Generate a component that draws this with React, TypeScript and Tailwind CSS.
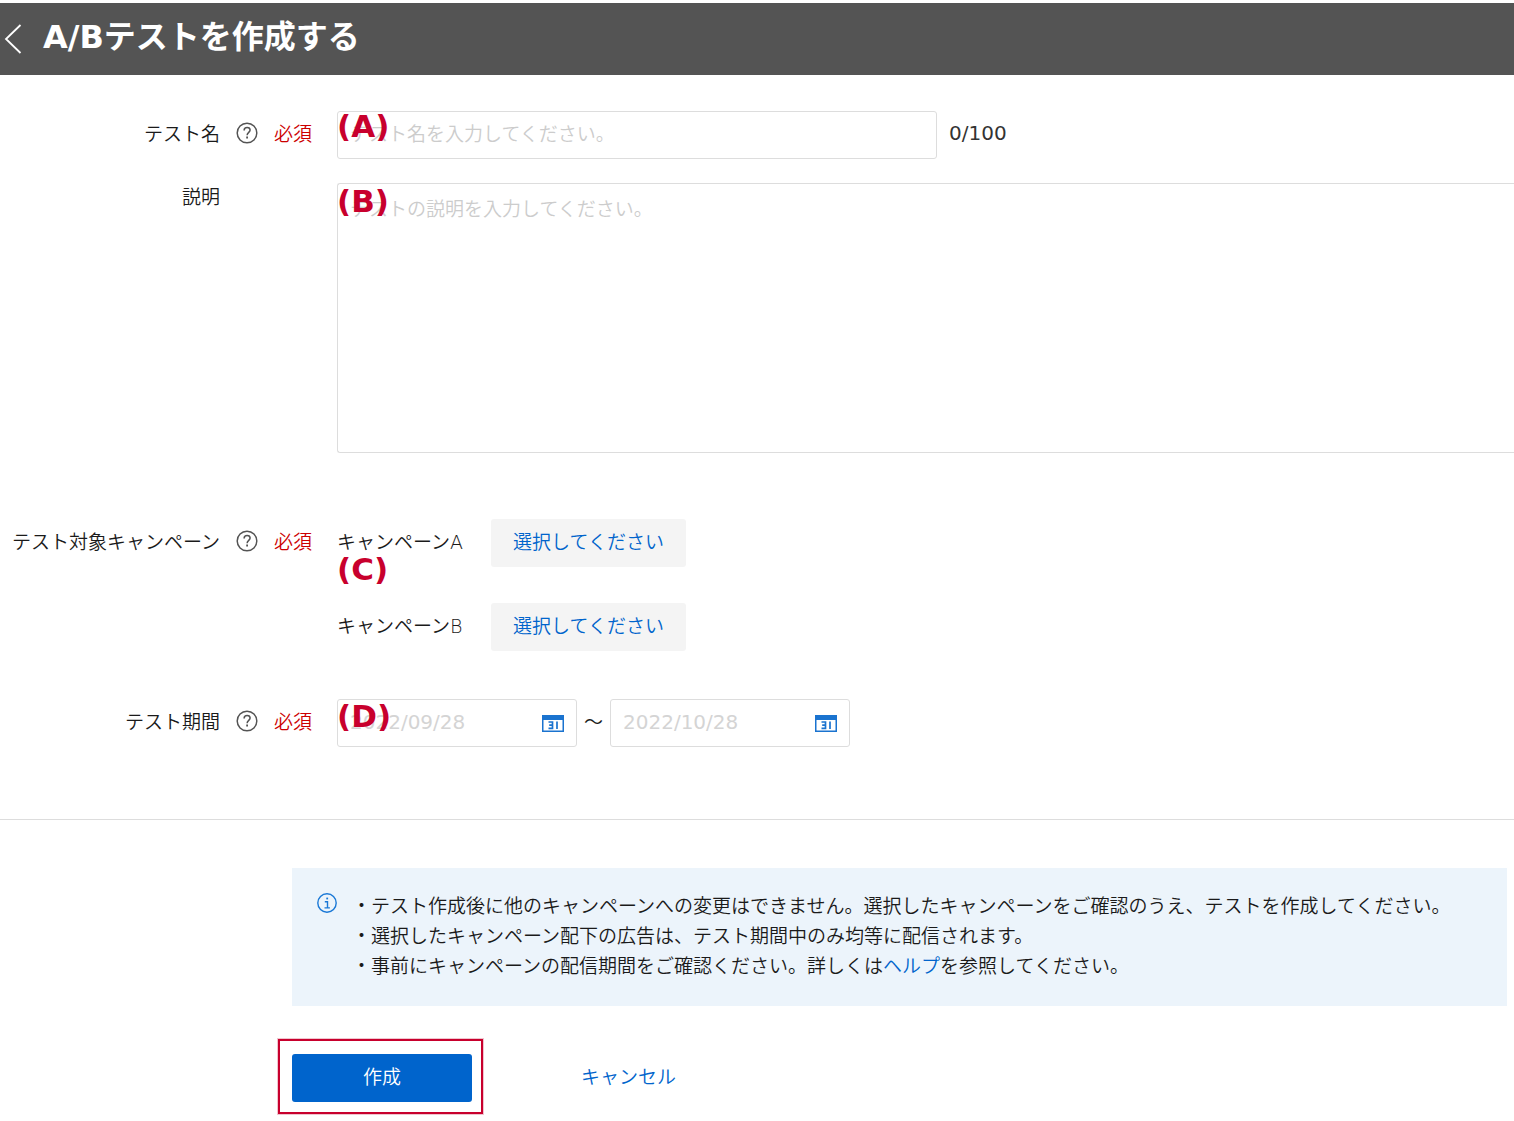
import { useState } from "react";
import type { ReactNode } from "react";

type FormRowProps = {
  label: string;
  htmlFor: string;
  required?: boolean;
  labelClassName?: string;
  children: ReactNode;
};

type DateFieldProps = {
  id: string;
  label: string;
  placeholder: string;
};

type MarkerProps = {
  className: string;
  children: ReactNode;
};

const campaigns = [
  { id: "campaign-a", name: "キャンペーンA" },
  { id: "campaign-b", name: "キャンペーンB" },
];

function HelpIcon() {
  return (
    <svg width="22" height="22" viewBox="0 0 22 22" fill="none" stroke="#545454" aria-hidden="true">
      <circle cx="11" cy="11" r="9.8" strokeWidth="1.5" />
      <path d="M8.1 8.4c0-1.8 1.2-2.9 3-2.9s3 1 3 2.6c0 2.2-3 2.4-3 5.1" strokeWidth="1.5" />
      <path d="M11.1 14.5v1.9" strokeWidth="1.8" />
    </svg>
  );
}

function InfoIcon() {
  return (
    <svg width="20" height="20" viewBox="0 0 20 20" fill="none" stroke="#1a78d6" aria-hidden="true">
      <circle cx="10" cy="10" r="9.2" strokeWidth="1.4" />
      <path d="M9.3 5.5h1.8" strokeWidth="1.8" />
      <path d="M7.8 8.7h2.7v6M7.5 14.9h5.4" strokeWidth="1.4" />
    </svg>
  );
}

function CalendarIcon() {
  return (
    <svg width="22" height="17" viewBox="0 0 22 17" aria-hidden="true">
      <path d="M0 0h22v17H0z" fill="#1a73cf" />
      <path d="M1.5 5h19v10.5h-19z" fill="#fff" />
      <path d="M6.5 7h4v6.4h-4M7.2 10.2h3M15 6.4v7.6" fill="none" stroke="#1a73cf" strokeWidth="1.7" />
    </svg>
  );
}

function Marker({ className, children }: MarkerProps) {
  return (
    <span
      className={`pointer-events-none absolute left-0 text-[31px] leading-8 font-bold text-[#c8002d] ${className}`}
    >
      {children}
    </span>
  );
}

function FormRow({ label, htmlFor, required, labelClassName = "h-[46px]", children }: FormRowProps) {
  return (
    <div className="flex items-start">
      <div className={`flex shrink-0 items-center ${labelClassName}`}>
        <label htmlFor={htmlFor} className="w-[220px] text-right whitespace-nowrap">
          {label}
        </label>
        <div className="ml-4 flex w-[101px] items-center gap-4">
          {required && (
            <>
              <button type="button" aria-label={`${label}のヘルプ`} className="pb-0.5">
                <HelpIcon />
              </button>
              <span className="text-[#cc0000]">必須</span>
            </>
          )}
        </div>
      </div>
      <div className="min-w-0 flex-1">{children}</div>
    </div>
  );
}

function DateField({ id, label, placeholder }: DateFieldProps) {
  return (
    <div className="flex h-12 w-60 items-center rounded-[3px] border border-[#dddddd] pr-3">
      <input
        id={id}
        aria-label={label}
        placeholder={placeholder}
        className="h-full min-w-0 flex-1 pb-0.5 pl-3 text-xl font-normal outline-none placeholder:text-[#d4d4d4]"
      />
      <button type="button" aria-label={`${label}を選択`}>
        <CalendarIcon />
      </button>
    </div>
  );
}

export default function App() {
  const [name, setName] = useState("");

  return (
    <div className="overflow-x-hidden bg-white pt-[3px] font-['DejaVu_Sans','Noto_Sans_CJK_JP',sans-serif] text-[19px] leading-[30px] font-[350] text-[#1a1a1a]">
      <header className="flex h-[72px] items-center bg-[#545454] text-white">
        <button type="button" aria-label="戻る" className="ml-1">
          <svg width="18" height="30" viewBox="0 0 18 30" fill="none" stroke="currentColor" strokeWidth="1.8">
            <path d="M16.5 1 2 15l14.5 14" />
          </svg>
        </button>
        <h1 className="ml-[21px] pb-1 text-[32px] leading-10 font-bold">A/Bテストを作成する</h1>
      </header>

      <form onSubmit={(event) => event.preventDefault()}>
        <div className="border-b border-[#dddddd] pt-9 pb-18">
          <FormRow label="テスト名" htmlFor="test-name" required>
            <div className="flex items-center gap-3">
              <div className="relative w-[600px]">
                <input
                  id="test-name"
                  maxLength={100}
                  value={name}
                  onChange={(event) => setName(event.target.value)}
                  placeholder="テスト名を入力してください。"
                  className="block h-12 w-full rounded-[3px] border border-[#dddddd] px-3 pb-0.5 outline-none placeholder:text-[#cccccc]"
                />
                <Marker className="-top-px">(A)</Marker>
              </div>
              <span className="pb-1 text-xl font-normal text-[#333333]">{name.length}/100</span>
            </div>
          </FormRow>

          <div className="mt-6">
            <FormRow label="説明" htmlFor="description" labelClassName="h-7">
              <div className="relative">
                <textarea
                  id="description"
                  placeholder="テストの説明を入力してください。"
                  className="block h-[270px] w-full resize-none rounded-l-[3px] border border-r-0 border-[#dddddd] px-3 py-2.5 outline-none placeholder:text-[#cccccc]"
                />
                <Marker className="top-0.5">(B)</Marker>
              </div>
            </FormRow>
          </div>

          <div className="mt-[66px]">
            <FormRow label="テスト対象キャンペーン" htmlFor="campaign-a" required>
              <div className="relative flex flex-col gap-9">
                {campaigns.map((campaign) => (
                  <div key={campaign.id} className="flex items-center">
                    <span className="w-[154px] pb-0.5">{campaign.name}</span>
                    <button
                      id={campaign.id}
                      type="button"
                      className="h-12 w-[195px] rounded-[3px] bg-[#f4f4f4] pb-0.5 text-[#0064cc]"
                    >
                      選択してください
                    </button>
                  </div>
                ))}
                <Marker className="top-[34px]">(C)</Marker>
              </div>
            </FormRow>
          </div>

          <div className="mt-12">
            <FormRow label="テスト期間" htmlFor="start-date" required>
              <div className="relative flex items-center">
                <DateField id="start-date" label="開始日" placeholder="2022/09/28" />
                <span className="w-[33px] pb-0.5 text-center">～</span>
                <DateField id="end-date" label="終了日" placeholder="2022/10/28" />
                <Marker className="top-px">(D)</Marker>
              </div>
            </FormRow>
          </div>
        </div>

        <div className="mt-12 mr-[7px] ml-[292px] flex items-start bg-[#ecf4fb] pt-[23px] pr-4 pb-[25px] pl-[25px]">
          <span className="mt-0.5 shrink-0">
            <InfoIcon />
          </span>
          <ul className="ml-[15px]">
            <li>・テスト作成後に他のキャンペーンへの変更はできません。選択したキャンペーンをご確認のうえ、テストを作成してください。</li>
            <li>・選択したキャンペーン配下の広告は、テスト期間中のみ均等に配信されます。</li>
            <li>
              ・事前にキャンペーンの配信期間をご確認ください。詳しくは
              <a href="#help" className="text-[#0064cc]">
                ヘルプ
              </a>
              を参照してください。
            </li>
          </ul>
        </div>

        <div className="mt-[33px] ml-[278px] flex items-center pb-[7px]">
          <div className="border-2 border-[#c8002d] pt-[13px] pr-[9px] pb-2.5 pl-3 shadow-[0_0_0_1px_#f0c4ce]">
            <button type="submit" className="block h-12 w-[180px] rounded-[3px] bg-[#0064cc] pb-0.5 text-white">
              作成
            </button>
          </div>
          <button type="button" className="ml-[98px] text-[#0064cc]">
            キャンセル
          </button>
        </div>
      </form>
    </div>
  );
}
